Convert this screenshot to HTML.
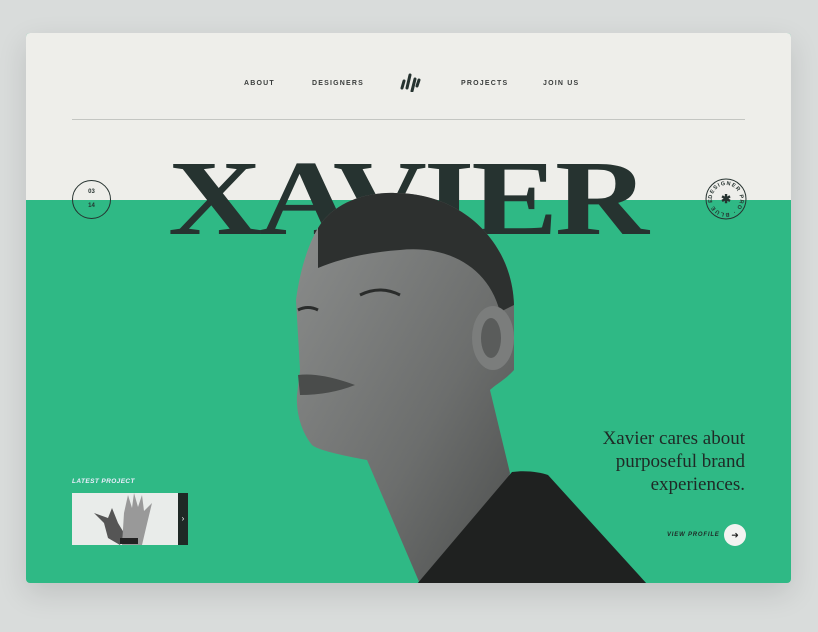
<!DOCTYPE html>
<html><head><meta charset="utf-8"><style>
*{margin:0;padding:0;box-sizing:border-box}
body{width:818px;height:632px;background:#d9dcdb;position:relative;overflow:hidden;font-family:"Liberation Sans",sans-serif}
.card{position:absolute;left:26px;top:33px;width:765px;height:550px;border-radius:4px;overflow:hidden;background:#2fb985;box-shadow:0 10px 30px rgba(0,0,0,.12)}
.top{position:absolute;left:0;top:0;width:765px;height:167px;background:#eeeeea}
.nav{position:absolute;top:47px;font-size:7px;font-weight:bold;letter-spacing:1.2px;color:#3a3d3c}
.line{position:absolute;left:46px;top:86px;width:673px;height:1px;background:#c4c6c2}
.title{position:absolute;left:142px;top:113px;font-family:"Liberation Serif",serif;font-weight:bold;font-size:107px;letter-spacing:-2.5px;color:#263330;line-height:1;transform:scaleX(1.215);transform-origin:left}
.circ{position:absolute;left:46px;top:147px;width:39px;height:39px;border:1px solid #263330;border-radius:50%;font-size:6px;font-weight:bold;color:#263330;text-align:center}
.quote{position:absolute;right:46px;top:394px;text-align:right;font-family:"Liberation Serif",serif;font-size:19px;line-height:23px;color:#1f2a26}
.vp{position:absolute;left:641px;top:499px;font-size:6px;font-weight:bold;font-style:italic;letter-spacing:.8px;color:#1f2a26}
.btn{position:absolute;left:698px;top:491px;width:22px;height:22px;border-radius:50%;background:#f3f3f1;font-size:9px;text-align:center;line-height:22px;color:#222}
.lp{position:absolute;left:46px;top:445px;font-size:6.5px;font-weight:bold;font-style:italic;letter-spacing:.4px;color:#eef}
.thumb{position:absolute;left:46px;top:460px;width:106px;height:52px;background:#e9ecea;overflow:hidden}
.bar{position:absolute;left:152px;top:460px;width:10px;height:52px;background:#1f2926;color:#fff;font-size:8px;text-align:center;line-height:52px}
</style></head><body>
<div class="card">
<div class="top"></div>
<div class="nav" style="left:218px">ABOUT</div>
<div class="nav" style="left:286px">DESIGNERS</div>
<div class="nav" style="left:435px">PROJECTS</div>
<div class="nav" style="left:517px">JOIN US</div>
<svg style="position:absolute;left:372px;top:39px" width="24" height="20" viewBox="0 0 24 20"><g stroke="#263330" stroke-width="3" stroke-linecap="round"><line x1="4" y1="16" x2="6" y2="9"/><line x1="9" y1="16" x2="12" y2="3"/><line x1="14" y1="19" x2="17" y2="7"/><line x1="19" y1="14" x2="21" y2="8"/></g></svg>
<div class="line"></div>
<div class="title">XAVIER</div>
<div class="circ"><div style="margin-top:8px">03</div><div style="margin-top:8px">14</div></div>
<svg style="position:absolute;left:679px;top:145px" width="42" height="42" viewBox="0 0 42 42"><circle cx="21" cy="21" r="20" fill="none" stroke="#263330" stroke-width="1"/><defs><path id="cp" d="M21,21 m-14,0 a14,14 0 1,1 28,0 a14,14 0 1,1 -28,0"/></defs><text font-size="5.5" font-weight="bold" fill="#263330" letter-spacing="1" font-family="Liberation Sans"><textPath href="#cp">DESIGNER PRO · BLUE EDITION ·</textPath></text><text x="21" y="25" text-anchor="middle" font-size="12" font-weight="bold" fill="#263330">✱</text></svg>
<svg style="position:absolute;left:-26px;top:-33px" width="818" height="632" viewBox="0 0 818 632">
<defs><linearGradient id="sk" x1="0" y1="0" x2="1" y2="1"><stop offset="0" stop-color="#8c8e8d"/><stop offset=".6" stop-color="#6c6e6d"/><stop offset="1" stop-color="#4c4e4d"/></linearGradient></defs>
<path d="M318,228 C335,200 370,192 395,193 C460,193 512,240 514,305 L514,370 C505,380 495,385 490,390 L510,473 L480,584 L420,584 L367,460 C340,455 318,450 312,445 C300,430 296,410 297,395 L300,370 L296,300 C300,270 308,245 318,228 Z" fill="url(#sk)"/>
<path d="M318,228 C335,200 370,192 395,193 C460,193 512,240 514,305 L500,312 C488,265 445,245 400,250 C370,252 342,258 318,268 Z" fill="#2d302f"/>
<ellipse cx="493" cy="338" rx="21" ry="32" fill="#7b7d7c"/>
<ellipse cx="491" cy="338" rx="10" ry="20" fill="#5a5c5b"/>
<path d="M360,295 Q380,285 400,295" stroke="#2a2c2b" stroke-width="3" fill="none"/>
<path d="M298,310 Q308,305 318,310" stroke="#2a2c2b" stroke-width="3" fill="none"/>
<path d="M298,375 Q320,372 355,385 Q330,395 300,395 Z" fill="#4a4c4b"/>
<path d="M417,584 L512,472 C525,470 540,472 548,475 L647,584 Z" fill="#1f2120"/>
</svg>
<div class="quote">Xavier cares about<br>purposeful brand<br>experiences.</div>
<div class="vp">VIEW PROFILE</div>
<div class="btn">➜</div>
<div class="lp">LATEST PROJECT</div>
<div class="thumb"><svg width="106" height="52"><g fill="#555"><path d="M22,20 L32,30 L36,45 L48,52 L52,40 L46,30 L40,15 L36,25 Z"/></g><g fill="#999"><path d="M50,52 L52,20 L56,2 L60,15 L62,0 L66,14 L70,2 L72,18 L80,10 L74,35 L70,52 Z"/></g><rect x="48" y="45" width="18" height="6" fill="#222"/></svg></div>
<div class="bar">›</div>
</div>
</body></html>
